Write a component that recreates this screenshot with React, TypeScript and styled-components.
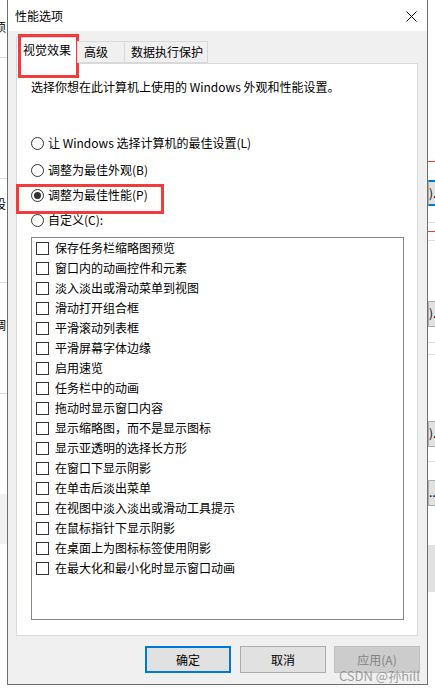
import * as React from "react";
import styled, { createGlobalStyle } from "styled-components";

const GlobalStyle = createGlobalStyle`
  html, body {
    margin: 0;
    padding: 0;
    background: #ffffff;
  }
  body {
    font-family: "Noto Sans CJK SC", "Noto Sans", sans-serif;
    font-size: 12px;
    color: #000;
  }
`;

const FONT = `"Noto Sans CJK SC", "Noto Sans", sans-serif`;

const Desktop = styled.div`
  position: relative;
  width: 435px;
  height: 692px;
  overflow: hidden;
  background: #ffffff;
`;

// slivers of the windows lying behind the dialog
const BackWindow = styled.div<{ $side: "left" | "right" }>`
  position: absolute;
  top: 0;
  ${(p) => (p.$side === "left" ? "left: 0;" : "right: 0;")}
  width: 7px;
  height: 692px;
  overflow: hidden;
  display: flex;
  flex-direction: column;
  background: #ffffff;
`;

const BackCell = styled.div<{ $h: number; $line?: string; $bg?: string; $pad?: number }>`
  flex-shrink: 0;
  height: ${(p) => p.$h}px;
  box-sizing: border-box;
  padding-top: ${(p) => p.$pad || 0}px;
  background: ${(p) => p.$bg || "transparent"};
  border-bottom: ${(p) => (p.$line ? `1px solid ${p.$line}` : "none")};
  font-family: ${FONT};
  font-size: 12px;
  line-height: 16px;
  white-space: nowrap;
`;

const BackGlyph = styled.span`
  display: inline-block;
  margin-left: -6px;
`;

const BackButton = styled.div<{ $focus?: boolean }>`
  flex-shrink: 0;
  height: 26px;
  box-sizing: border-box;
  background: #e1e1e1;
  border-top: ${(p) => (p.$focus ? "2px solid #0078d7" : "1px solid #adadad")};
  border-bottom: ${(p) => (p.$focus ? "2px solid #0078d7" : "1px solid #adadad")};
  border-left: 1px solid #adadad;
  font-family: ${FONT};
  font-size: 12px;
  line-height: 22px;
  white-space: nowrap;
`;

const Dialog = styled.div`
  position: absolute;
  left: 7px;
  top: -1px;
  width: 421px;
  height: 686px;
  box-sizing: border-box;
  border: 1px solid #6f6f6f;
  background: #f0f0f0;
  display: flex;
  flex-direction: column;
`;

const TitleBar = styled.div`
  height: 31px;
  background: #ffffff;
  display: flex;
  align-items: center;
  justify-content: space-between;
  padding: 0 10px 0 7px;
  flex-shrink: 0;
`;

const Title = styled.span`
  font-size: 12px;
  line-height: 16px;
  margin-top: 1px;
`;

const CloseButton = styled.div`
  width: 12px;
  height: 12px;
  display: flex;
  align-items: center;
  justify-content: center;
  margin-top: 1px;
`;

const Body = styled.div`
  flex: 1;
  display: flex;
  flex-direction: column;
  padding: 7px 9px 11px 8px;
`;

const TabStrip = styled.div`
  display: flex;
  align-items: flex-end;
  height: 26px;
  margin-bottom: -1px;
  position: relative;
  z-index: 1;
`;

const Tab = styled.div<{ $active?: boolean; $width: number }>`
  position: relative;
  box-sizing: border-box;
  width: ${(p) => p.$width}px;
  height: ${(p) => (p.$active ? 27 : 22)}px;
  padding-left: 6px;
  background: ${(p) => (p.$active ? "#ffffff" : "#f0f0f0")};
  border: 1px solid #d9d9d9;
  border-bottom: ${(p) => (p.$active ? "none" : "1px solid #d9d9d9")};
  margin-left: ${(p) => (p.$active ? 0 : -1)}px;
  margin-bottom: ${(p) => (p.$active ? 0 : 1)}px;
  font-size: 12px;
  line-height: ${(p) => (p.$active ? 24 : 19)}px;
  white-space: nowrap;
  &:first-child {
    margin-left: 0;
  }
`;

const HighlightBox = styled.div<{ $left: number; $top: number; $width: number; $height: number }>`
  position: absolute;
  left: ${(p) => p.$left}px;
  top: ${(p) => p.$top}px;
  width: ${(p) => p.$width}px;
  height: ${(p) => p.$height}px;
  box-sizing: border-box;
  border: 3px solid #f23c3c;
  pointer-events: none;
`;

const Panel = styled.div`
  box-sizing: border-box;
  height: 573px;
  background: #ffffff;
  border: 1px solid #d9d9d9;
  padding: 15px 0 0 14px;
  display: flex;
  flex-direction: column;
`;

const Description = styled.div`
  font-size: 12px;
  line-height: 16px;
  white-space: nowrap;
`;

const RadioRow = styled.div<{ $gap: number }>`
  position: relative;
  display: flex;
  align-items: center;
  gap: 4px;
  height: 16px;
  margin-top: ${(p) => p.$gap}px;
  font-size: 12px;
  line-height: 16px;
  white-space: nowrap;
`;

const RadioCircle = styled.span<{ $checked?: boolean }>`
  width: 13px;
  height: 13px;
  box-sizing: border-box;
  border: 1px solid #333333;
  border-radius: 50%;
  background: #ffffff;
  display: flex;
  align-items: center;
  justify-content: center;
  flex-shrink: 0;
  &::after {
    content: "";
    display: ${(p) => (p.$checked ? "block" : "none")};
    width: 7px;
    height: 7px;
    border-radius: 50%;
    background: #333333;
  }
`;

const ListBox = styled.div`
  box-sizing: border-box;
  width: 373px;
  height: 383px;
  margin-top: 9px;
  border: 1px solid #828790;
  background: #ffffff;
  padding-left: 4px;
  display: flex;
  flex-direction: column;
`;

const CheckRow = styled.div`
  display: flex;
  align-items: center;
  gap: 6px;
  height: 20px;
  font-size: 12px;
  line-height: 16px;
  white-space: nowrap;
`;

const CheckBox = styled.span`
  width: 13px;
  height: 13px;
  box-sizing: border-box;
  border: 1px solid #333333;
  background: #ffffff;
  flex-shrink: 0;
`;

const ButtonRow = styled.div`
  display: flex;
  justify-content: flex-end;
  gap: 8px;
  margin-top: 10px;
  margin-right: -2px;
`;

const DialogButton = styled.div<{ $variant?: "default" | "normal" | "disabled" }>`
  box-sizing: border-box;
  width: 86px;
  height: 27px;
  display: flex;
  align-items: center;
  justify-content: center;
  font-size: 12px;
  background: ${(p) => (p.$variant === "disabled" ? "#cccccc" : "#e1e1e1")};
  color: ${(p) => (p.$variant === "disabled" ? "#838383" : "#000000")};
  border: ${(p) =>
    p.$variant === "default"
      ? "2px solid #0078d7"
      : p.$variant === "disabled"
      ? "1px solid #bfbfbf"
      : "1px solid #adadad"};
  &:first-child {
    margin-right: 1px;
  }
`;

const Watermark = styled.span`
  position: absolute;
  right: 15px;
  top: 668px;
  font-family: ${FONT};
  font-size: 13px;
  line-height: 16px;
  color: rgba(140, 140, 140, 0.85);
  white-space: nowrap;
`;

const effects = [
  "保存任务栏缩略图预览",
  "窗口内的动画控件和元素",
  "淡入淡出或滑动菜单到视图",
  "滑动打开组合框",
  "平滑滚动列表框",
  "平滑屏幕字体边缘",
  "启用速览",
  "任务栏中的动画",
  "拖动时显示窗口内容",
  "显示缩略图，而不是显示图标",
  "显示亚透明的选择长方形",
  "在窗口下显示阴影",
  "在单击后淡出菜单",
  "在视图中淡入淡出或滑动工具提示",
  "在鼠标指针下显示阴影",
  "在桌面上为图标标签使用阴影",
  "在最大化和最小化时显示窗口动画",
];

const radios = [
  { label: "让 Windows 选择计算机的最佳设置(L)", gap: 40 },
  { label: "调整为最佳外观(B)", gap: 11 },
  { label: "调整为最佳性能(P)", gap: 9, checked: true },
  { label: "自定义(C):", gap: 9 },
];

export default function App() {
  return (
    <Desktop>
      <GlobalStyle />

      <BackWindow $side="left">
        <BackCell $h={58} $line="#dcdcdc" $pad={19}>
          <BackGlyph>须</BackGlyph>
        </BackCell>
        <BackCell $h={121} $line="#dcdcdc" />
        <BackCell $h={104} $line="#dcdcdc" $pad={17}>
          <BackGlyph>设</BackGlyph>
        </BackCell>
        <BackCell $h={111} $line="#dcdcdc" $pad={34}>
          <BackGlyph>调</BackGlyph>
        </BackCell>
        <BackCell $h={100} />
        <BackCell $h={50} $bg="#f0f0f0" />
      </BackWindow>

      <BackWindow $side="right">
        <BackCell $h={162} $line="#f23c3c" />
        <BackCell $h={18} />
        <BackButton $focus>).</BackButton>
        <BackCell $h={17} $line="#dcdcdc" />
        <BackCell $h={9} $line="#f23c3c" />
        <BackCell $h={9} $line="#dcdcdc" />
        <BackCell $h={60} />
        <BackButton>).</BackButton>
        <BackCell $h={16} $line="#dcdcdc" />
        <BackCell $h={12} $line="#dcdcdc" />
        <BackCell $h={66} />
        <BackButton>).</BackButton>
        <BackCell $h={15} $line="#dcdcdc" />
        <BackCell $h={18} />
        <BackButton>...</BackButton>
        <BackCell $h={39} />
        <BackCell $h={47} $bg="#e1e1e1" />
      </BackWindow>

      <Dialog>
        <TitleBar>
          <Title>性能选项</Title>
          <CloseButton>
            <svg width="11" height="11" viewBox="0 0 11 11">
              <path d="M0.5 0.5 L10.5 10.5 M10.5 0.5 L0.5 10.5" stroke="#000" strokeWidth="1" fill="none" />
            </svg>
          </CloseButton>
        </TitleBar>
        <Body>
          <TabStrip>
            <Tab $active $width={62}>
              视觉效果
              <HighlightBox $left={1} $top={-4} $width={61} $height={44} />
            </Tab>
            <Tab $width={48}>高级</Tab>
            <Tab $width={84}>数据执行保护</Tab>
          </TabStrip>
          <Panel>
            <Description>选择你想在此计算机上使用的 Windows 外观和性能设置。</Description>
            {radios.map((r) => (
              <RadioRow key={r.label} $gap={r.gap}>
                <RadioCircle $checked={r.checked} />
                {r.label}
                {r.checked && <HighlightBox $left={-15} $top={-3} $width={148} $height={30} />}
              </RadioRow>
            ))}
            <ListBox>
              {effects.map((e) => (
                <CheckRow key={e}>
                  <CheckBox />
                  {e}
                </CheckRow>
              ))}
            </ListBox>
          </Panel>
          <ButtonRow>
            <DialogButton $variant="default">确定</DialogButton>
            <DialogButton>取消</DialogButton>
            <DialogButton $variant="disabled">应用(A)</DialogButton>
          </ButtonRow>
        </Body>
      </Dialog>
      <Watermark>CSDN @孙hill</Watermark>
    </Desktop>
  );
}
